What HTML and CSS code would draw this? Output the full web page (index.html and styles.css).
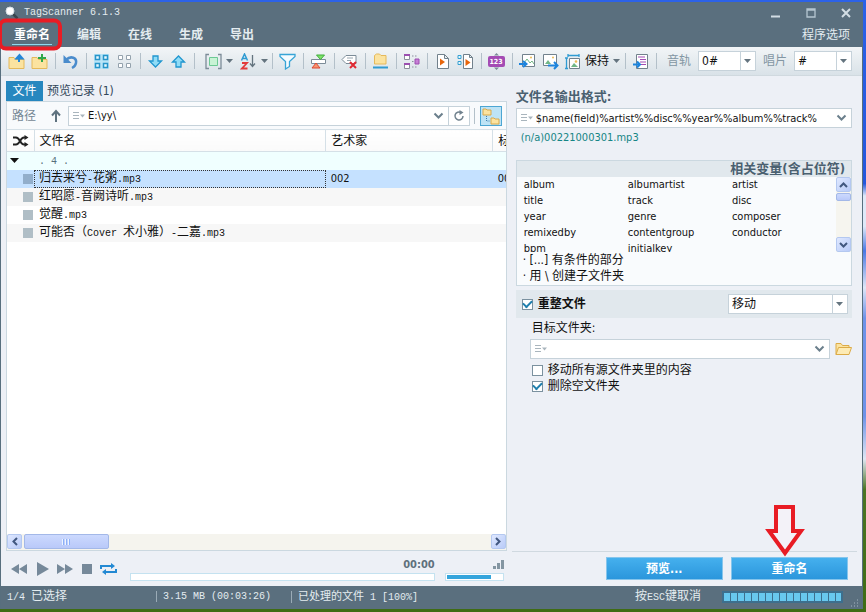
FILE: index.html
```html
<!DOCTYPE html>
<html lang="zh-CN">
<head>
    <meta charset="UTF-8">
    <meta name="viewport" content="width=device-width, initial-scale=1.0">
    <title>TagScanner 6.1.3</title>
    <link rel="stylesheet" href="styles.css">
</head>
<body>
    <div class="window">
        <header class="header">
            <div class="titlebar">
                <svg class="app-icon" width="14" height="14" viewBox="0 0 14 14"><path d="M8 8l4.500 4.500" stroke="#39454e" stroke-width="2.500"/><circle cx="5" cy="5" r="4" fill="#fff" stroke="#d5dee4"/></svg>
                <h1 class="title mono">TagScanner 6.1.3</h1>
                <button class="win-button" aria-label="最小化"><svg width="12" height="12"><path d="M1 9.500h9" stroke="#d2dde4" stroke-width="2"/></svg></button>
                <button class="win-button" aria-label="最大化"><svg width="12" height="12"><path d="M2 2h8v8H2zM2 3h8" fill="none" stroke="#b5c6d1" stroke-width="1.300"/></svg></button>
                <button class="win-button" aria-label="关闭"><svg width="12" height="12"><path d="M2 2l8 8M10 2l-8 8" stroke="#d2dde4" stroke-width="2"/></svg></button>
            </div>
            <nav class="menu">
                <a class="menu-item active" href="#">重命名</a>
                <a class="menu-item" href="#">编辑</a>
                <a class="menu-item" href="#">在线</a>
                <a class="menu-item" href="#">生成</a>
                <a class="menu-item" href="#">导出</a>
                <a class="menu-options" href="#">程序选项</a>
            </nav>
            <svg class="mark-ring" width="66" height="34" viewBox="0 0 66 34"><rect x="2" y="2.500" width="60" height="28" rx="6" fill="none" stroke="#e81c24" stroke-width="4"/></svg>
        </header>

        <div class="toolbar">
            <button class="tool" aria-label="打开文件夹"><svg width="17" height="17"><path d="M1 4.500h5l1.500 2H16v9H1z" fill="#fbe3a0" stroke="#e5b95b"/><path d="M11 9V4M8.500 5.500L11.500 2l3 3.500z" fill="#2386d8" stroke="#2386d8" stroke-width="2"/></svg></button>
            <button class="tool" aria-label="添加文件夹"><svg width="17" height="17"><path d="M1 4.500h5l1.500 2H16v9H1z" fill="#fbe3a0" stroke="#e5b95b"/><path d="M11 1v8M7 5h8" stroke="#2fa84a" stroke-width="2"/></svg></button>
            <span class="sep"></span>
            <button class="tool" aria-label="撤销"><svg width="17" height="17"><path d="M4 7c5-5 11-2 10 3-.5 2.500-2 4-4 5" fill="none" stroke="#4a8ccc" stroke-width="2.500"/><path d="M1.500 2v8h8z" fill="#4a8ccc"/></svg></button>
            <span class="sep"></span>
            <button class="tool" aria-label="全选"><svg width="17" height="17"><path d="M1 1h15v15H1z" fill="#b9e5f7"/><path d="M2.500 2.500h4v4h-4zM10.500 2.500h4v4h-4zM2.500 10.500h4v4h-4zM10.500 10.500h4v4h-4z" fill="#e9f8fd" stroke="#2795c9" stroke-width="1.500"/></svg></button>
            <button class="tool" aria-label="取消选择"><svg width="17" height="17"><path d="M2.500 2.500h4v4h-4zM10.500 2.500h4v4h-4zM2.500 10.500h4v4h-4zM10.500 10.500h4v4h-4z" fill="#fff" stroke="#94a2ad"/></svg></button>
            <span class="sep"></span>
            <button class="tool" aria-label="下移"><svg width="17" height="17"><path d="M6 3h5v5h3.500l-6 6-6-6H6z" fill="#8fdcf7" stroke="#2196cf" stroke-width="1.300"/></svg></button>
            <button class="tool" aria-label="上移"><svg width="17" height="17"><path d="M6 14h5V9h3.500l-6-6-6 6H6z" fill="#8fdcf7" stroke="#2196cf" stroke-width="1.300"/></svg></button>
            <span class="sep"></span>
            <button class="tool tool-drop" aria-label="视图"><svg width="17" height="17"><path d="M4 1.500H1v14h3M13 1.500h3v14h-3" fill="none" stroke="#7c8c98" stroke-width="1.300"/><path d="M4.500 4.500h8v8h-8z" fill="#c8f3d5" stroke="#6cc994"/></svg><svg class="caret" width="7" height="4"><path d="M0 0h7L3.500 4z"/></svg></button>
            <button class="tool tool-drop" aria-label="排序"><svg width="17" height="17"><path d="M1.500 7.500L4.500 1l3 6.500M2.500 5.500h4" fill="none" stroke="#2f9bd2" stroke-width="1.500"/><path d="M2 10h5l-5 5.500h5.500" fill="none" stroke="#e23b3b" stroke-width="1.800"/><path d="M12.500 2v11M10 10.500l2.500 3 2.500-3" fill="none" stroke="#64747f" stroke-width="1.300"/></svg><svg class="caret" width="7" height="4"><path d="M0 0h7L3.500 4z"/></svg></button>
            <span class="sep"></span>
            <button class="tool" aria-label="筛选"><svg width="17" height="17"><path d="M1 1.500h15v2l-5.500 5v5l-4 2.500V8.500L1 3.500z" fill="#f4fbff" stroke="#37a4d6" stroke-width="1.300"/></svg></button>
            <span class="sep"></span>
            <button class="tool" aria-label="交换"><svg width="17" height="17"><path d="M1.500 6.500h14v4h-14z" fill="#fff" stroke="#7c8c98"/><path d="M6.500 2h8l-4 4.500z" fill="#7ee26a" stroke="#3fae3a"/><path d="M2 15h8L6 10z" fill="#f7936f" stroke="#dc4733"/></svg></button>
            <span class="sep"></span>
            <button class="tool" aria-label="清除标签"><svg width="17" height="17"><path d="M5 2.500h10v8H5L1 6.500z" fill="#fff" stroke="#7c8c98"/><path d="M6 5h6M6 7.500h4" stroke="#97a5af"/><path d="M9 9l6 6M15 9l-6 6" stroke="#e02a33" stroke-width="2"/></svg></button>
            <span class="sep"></span>
            <button class="tool" aria-label="文件夹"><svg width="17" height="17"><path d="M2.500 2.500l2-1.500h3l1.500 1.500h5V11H2.500z" fill="#fbe3a0" stroke="#e5b95b"/><path d="M1 14.500h15" stroke="#2f9bd2" stroke-width="2"/></svg></button>
            <span class="sep"></span>
            <button class="tool" aria-label="拆分字段"><svg width="17" height="17"><path d="M1.500 1.500h5v5h-5zM1.500 10.500h5v5h-5z" fill="#fff" stroke="#8b8f9c"/><path d="M1 2h6M1 11h6" stroke="#9c4fb0" stroke-width="2"/><path d="M9 3h5M9 14h5M9 8.500h2" stroke="#8b8f9c" stroke-dasharray="1.500 1.500"/><path d="M12 6h4v5h-4z" fill="#c77fd6" stroke="#9c4fb0"/></svg></button>
            <span class="sep"></span>
            <button class="tool" aria-label="播放文件"><svg width="17" height="17"><path d="M3.500 1.500h7l4 4v10h-11zM10.500 1.500v4h4" fill="#fff" stroke="#71818c"/><path d="M6 5.500v7l5-3.500z" fill="#e8660c"/></svg></button>
            <button class="tool" aria-label="播放列表"><svg width="17" height="17"><path d="M1 2.500h3v3H1zM1 8.500h3v3H1z" fill="#e6f7fe" stroke="#35a0d2"/><path d="M6.500 1.500h6l3 3v11h-9zM12.500 1.500v3h3" fill="#fff" stroke="#71818c"/><path d="M8.500 6v7l5-3.500z" fill="#e8660c"/></svg></button>
            <span class="sep"></span>
            <button class="tool" aria-label="自动编号"><svg width="17" height="17"><path d="M6 2.500L8.500 0 11 2.500zM6 14.500L8.500 17l2.500-2.500z" fill="#7c8c98"/><rect x="0" y="3" width="17" height="11" rx="2" fill="#a44cb4"/><text x="8" y="11" class="icon-digits">123</text></svg></button>
            <span class="sep"></span>
            <button class="tool" aria-label="导入封面"><svg width="17" height="17"><path d="M3.500 1.500h12v12h-12z" fill="#fff" stroke="#71818c"/><path d="M5 10l3-4 3 4 2-2 2 3" fill="none" stroke="#72b786"/><circle cx="12" cy="4.500" r="1" fill="#edbb54"/><path d="M0 11h6M4 8l3.500 3L4 14" fill="none" stroke="#1c84dd" stroke-width="2"/></svg></button>
            <button class="tool" aria-label="导出封面"><svg width="17" height="17"><path d="M1.500 1.500h13v11h-13z" fill="#fff" stroke="#71818c"/><path d="M3 11l3-4 3 4z" fill="#72b786"/><circle cx="11" cy="4.500" r="1" fill="#edbb54"/><path d="M6 12.500h8M12 9l3.500 3.500L12 16" fill="none" stroke="#1c84dd" stroke-width="2"/></svg></button>
            <button class="tool tool-text"><svg width="17" height="17"><path d="M4 1v3M15 1v3M4 2.500h11M1 5h3M1 15.500h3M2.500 5v10" fill="none" stroke="#2f9bd2" stroke-width="1.300"/><path d="M5.500 5.500h10v10h-10z" fill="#fff" stroke="#71818c"/><path d="M7 14l3-4 4 4z" fill="#72b786"/><circle cx="12" cy="8.500" r="1.300" fill="#edbb54"/></svg><span>保持</span><svg class="caret" width="7" height="4"><path d="M0 0h7L3.500 4z"/></svg></button>
            <span class="sep"></span>
            <button class="tool" aria-label="导入文本"><svg width="17" height="17"><path d="M4.500 1.500h11v14h-11z" fill="#fff" stroke="#71818c"/><path d="M6 4h7M8 6.500h6M8 9h6M9 11.500h5" stroke="#a44cb4"/><path d="M1 11.500h6M5 8.500l3 3-3 3" fill="none" stroke="#1c84dd" stroke-width="2"/></svg></button>
            <span class="sep"></span>
            <label class="tool-label" for="trackFormat">音轨</label>
            <div class="select select-small">
                <select id="trackFormat"><option>0#</option></select>
                <svg class="caret" width="7" height="4"><path d="M0 0h7L3.500 4z"/></svg>
            </div>
            <label class="tool-label" for="discFormat">唱片</label>
            <div class="select select-small">
                <select id="discFormat"><option>#</option></select>
                <svg class="caret" width="7" height="4"><path d="M0 0h7L3.500 4z"/></svg>
            </div>
        </div>

        <main class="content">
            <section class="files">
                <div class="tabs">
                    <button class="tab active">文件</button>
                    <button class="tab">预览记录 (1)</button>
                </div>
                <div class="file-box">
                    <div class="path-row">
                        <label class="path-label" for="path">路径</label>
                        <button class="plain path-up" aria-label="上级文件夹"><svg width="12" height="14"><path d="M6 13V2M2 6.500L6 2l4 4.500" fill="none" stroke="#5f727f" stroke-width="2"/></svg></button>
                        <div class="combo">
                            <svg class="history" width="12" height="8"><path d="M0 .5h6M0 3.500h6M0 6.500h6" stroke="#a9b5bd"/><path d="M7 2.500h5l-2.500 3z" fill="#a9b5bd"/></svg>
                            <input id="path" type="text" value="E:\yy\">
                            <button class="plain" aria-label="展开路径"><svg width="11" height="8"><path d="M1.500 1.500l4 4 4-4" fill="none" stroke="#6b7f8c" stroke-width="2"/></svg></button>
                        </div>
                        <button class="plain refresh" aria-label="刷新"><svg width="12" height="12"><path d="M8 2.500A4 4 0 1 0 10 6" fill="none" stroke="#71828e" stroke-width="1.500"/><path d="M6.500 0v5l4-2.500z" fill="#71828e"/></svg></button>
                        <span class="sep"></span>
                        <button class="plain subfolders" aria-label="包含子文件夹"><svg width="18" height="18"><path d="M1 2h3l1 1h4v5H1zM9 11h3l1 1h4v5H9z" fill="#fbe3a0" stroke="#d9a94a"/><path d="M4.500 9v5H8" fill="none" stroke="#3f7fae" stroke-dasharray="1 1"/></svg></button>
                    </div>
                    <table class="file-table">
                        <colgroup><col class="col-mark"><col><col class="col-artist"><col class="col-title"></colgroup>
                        <thead>
                            <tr>
                                <th><svg width="17" height="12"><path d="M1 2.500h3c4 0 4 7 8 7h2M1 9.500h3c4 0 4-7 8-7h2" fill="none" stroke="#222" stroke-width="2"/><path d="M12.500 0v5l4-2.500zM12.500 7v5l4-2.500z" fill="#222"/></svg></th>
                                <th>文件名</th>
                                <th>艺术家</th>
                                <th>标题</th>
                            </tr>
                        </thead>
                        <tbody>
                            <tr class="group"><td><svg width="9" height="6"><path d="M0 0h9L4.500 5z" fill="#111"/></svg></td><td colspan="3"><span class="mono">. 4 .</span></td></tr>
                            <tr class="selected"><td><span class="mark"></span></td><td class="focused">归去来兮<span class="mono">-</span>花粥<span class="mono">.mp3</span></td><td>002</td><td>00</td></tr>
                            <tr class="striped"><td><span class="mark"></span></td><td>红昭愿<span class="mono">-</span>音阙诗听<span class="mono">.mp3</span></td><td></td><td></td></tr>
                            <tr><td><span class="mark"></span></td><td>觉醒<span class="mono">.mp3</span></td><td></td><td></td></tr>
                            <tr class="striped"><td><span class="mark"></span></td><td>可能否（<span class="mono">Cover </span>术小雅）<span class="mono">-</span>二嘉<span class="mono">.mp3</span></td><td></td><td></td></tr>
                        </tbody>
                    </table>
                    <div class="hscroll">
                        <button class="scroll-button" aria-label="向左滚动"><svg width="8" height="9"><path d="M6 1L2.500 4.500 6 8" fill="none" stroke="#41577f" stroke-width="2"/></svg></button>
                        <div class="thumb"><svg width="9" height="6"><path d="M.5 0v6M3.500 0v6M6.500 0v6" stroke="#eef4fe"/><path d="M1.500 0v6M4.500 0v6M7.500 0v6" stroke="#8cb0f8"/></svg></div>
                        <button class="scroll-button scroll-end" aria-label="向右滚动"><svg width="8" height="9"><path d="M2 1l3.500 3.500L2 8" fill="none" stroke="#41577f" stroke-width="2"/></svg></button>
                    </div>
                </div>
                <div class="player">
                    <div class="player-buttons">
                        <button class="plain" aria-label="上一首"><svg width="17" height="12"><path d="M8 1v10L0 6zM16 1v10L8 6z" fill="#76899a"/></svg></button>
                        <button class="plain" aria-label="播放"><svg width="13" height="14"><path d="M1 0v14l12-7z" fill="#76899a"/></svg></button>
                        <button class="plain" aria-label="下一首"><svg width="17" height="12"><path d="M0 1v10l8-5zM8 1v10l8-5z" fill="#76899a"/></svg></button>
                        <button class="plain" aria-label="停止"><svg width="10" height="10"><path d="M0 0h10v10H0z" fill="#76899a"/></svg></button>
                        <button class="plain" aria-label="循环"><svg width="17" height="12"><path d="M1 6V3h11M16 6v3H5" fill="none" stroke="#2389d3" stroke-width="2"/><path d="M11 0v6l4-3zM6 6v6L2 9z" fill="#2389d3"/></svg></button>
                    </div>
                    <div class="seek">
                        <span class="time">00:00</span>
                        <div class="bar"></div>
                    </div>
                    <div class="volume">
                        <svg width="11" height="9"><path d="M0 6h3v3H0zM4 3h3v6H4zM8 0h3v9H8z" fill="#8496a2"/></svg>
                        <div class="bar"><div class="level"></div></div>
                    </div>
                </div>
            </section>

            <section class="settings">
                <div class="settings-body">
                    <label class="heading" for="format">文件名输出格式:</label>
                    <div class="combo">
                        <svg class="history" width="12" height="8"><path d="M0 .5h6M0 3.500h6M0 6.500h6" stroke="#a9b5bd"/><path d="M7 2.500h5l-2.500 3z" fill="#a9b5bd"/></svg>
                        <input id="format" type="text" value="$name(field)%artist%%disc%%year%%album%%track%">
                        <button class="plain" aria-label="展开格式"><svg width="11" height="8"><path d="M1.500 1.500l4 4 4-4" fill="none" stroke="#6b7f8c" stroke-width="2"/></svg></button>
                    </div>
                    <p class="preview">(n/a)00221000301.mp3</p>

                    <div class="variables">
                        <h2 class="variables-title">相关变量(含占位符)</h2>
                        <div class="variables-list">
                            <ul>
                                <li>album</li><li>albumartist</li><li>artist</li>
                                <li>title</li><li>track</li><li>disc</li>
                                <li>year</li><li>genre</li><li>composer</li>
                                <li>remixedby</li><li>contentgroup</li><li>conductor</li>
                                <li>bpm</li><li>initialkey</li>
                            </ul>
                            <div class="vscroll">
                                <button class="scroll-button" aria-label="向上滚动"><svg width="9" height="8"><path d="M1 6l3.500-3.500L8 6" fill="none" stroke="#41577f" stroke-width="2"/></svg></button>
                                <div class="thumb"></div>
                                <button class="scroll-button scroll-end" aria-label="向下滚动"><svg width="9" height="8"><path d="M1 2l3.500 3.500L8 2" fill="none" stroke="#41577f" stroke-width="2"/></svg></button>
                            </div>
                        </div>
                        <p>· [...] 有条件的部分</p>
                        <p>· 用 \ 创建子文件夹</p>
                    </div>

                    <div class="organize">
                        <label class="check"><input type="checkbox" checked>重整文件</label>
                        <div class="select">
                            <select aria-label="重整方式"><option>移动</option></select>
                            <svg class="caret" width="7" height="4"><path d="M0 0h7L3.500 4z"/></svg>
                        </div>
                    </div>
                    <div class="target">
                        <label for="target">目标文件夹:</label>
                        <div class="target-row">
                            <div class="combo">
                                <svg class="history" width="12" height="8"><path d="M0 .5h6M0 3.500h6M0 6.500h6" stroke="#a9b5bd"/><path d="M7 2.500h5l-2.500 3z" fill="#a9b5bd"/></svg>
                                <input id="target" type="text">
                                <button class="plain" aria-label="展开文件夹"><svg width="11" height="8"><path d="M1.500 1.500l4 4 4-4" fill="none" stroke="#6b7f8c" stroke-width="2"/></svg></button>
                            </div>
                            <button class="plain" aria-label="浏览"><svg width="17" height="14"><path d="M1 12.500v-11h5l1.500 2H14V6" fill="#fbe3a0" stroke="#dcab47"/><path d="M3.500 5.500h13l-2.500 7H1z" fill="#fdebb5" stroke="#dcab47"/></svg></button>
                        </div>
                        <label class="check"><input type="checkbox">移动所有源文件夹里的内容</label>
                        <label class="check"><input type="checkbox" checked>删除空文件夹</label>
                    </div>
                </div>
                <div class="actions">
                    <button class="action">预览...</button>
                    <button class="action">重命名</button>
                    <svg class="mark-arrow" width="40" height="54" viewBox="0 0 40 54"><path d="M11 3h17v24h8L20 49 4 27h7z" fill="#f3f2f8" stroke="#e81c24" stroke-width="4"/></svg>
                </div>
            </section>
        </main>

        <footer class="status">
            <span class="status-selected"><span class="mono">1/4 </span>已选择</span>
            <span class="status-size mono">3.15 MB (00:03:26)</span>
            <span class="status-done">已处理的文件<span class="mono"> 1 [100%]</span></span>
            <span class="status-hint">按<span class="mono">ESC</span>键取消</span>
            <div class="status-progress"></div>
            <svg class="grip" width="8" height="8"><path d="M6 1h1M6 4h1M3 4h1M6 7h1M3 7h1M0 7h1" stroke="#a7b7c1"/></svg>
        </footer>
    </div>
</body>
</html>
```
FILE: styles.css
```css
* {
    box-sizing: border-box;
}

body {
    display: flex;
    min-height: 100vh;
    margin: 0;
    padding: 2px 3px 3px 0;
    background:
        linear-gradient(#3f6c14, #3f6c14) bottom / 100% 3px no-repeat,
        linear-gradient(#2c62e8 0%, #2457dc 30%, #dfe9f8 32%, #dfe9f8 37%, #4a78e4 41%, #dfe6f6 47%, #6d92e8 52%, #6d92e8 68%, #dfe6f2 75%, #4b7423 80%, #3f6c14 100%);
    font: 12px/16px "DejaVu Sans Condensed", "Noto Sans CJK SC", sans-serif;
    color: #111;
}

button, input, select {
    font: inherit;
    color: inherit;
}

button {
    padding: 0;
    border: none;
    background: none;
    cursor: pointer;
}

svg {
    display: block;
    flex: none;
}

h1, h2, p, ul {
    margin: 0;
    padding: 0;
}

.mono {
    font-family: "Liberation Mono", monospace;
    font-size: 10px;
    font-weight: normal;
    white-space: pre;
}

.window {
    display: flex;
    flex: 1;
    flex-direction: column;
    min-width: 0;
    border: solid #586f7e;
    border-width: 0 1px;
    background: #edf0f6;
}

/* Header */
.header {
    position: relative;
    background: #5a6f7e;
    color: #e4ecf0;
}

.titlebar {
    display: flex;
    align-items: center;
    height: 22px;
    padding: 0 10px 0 4px;
}

.title {
    flex: 1;
    margin-left: 5px;
}

.win-button {
    margin-left: 23px;
}

.menu {
    display: flex;
    height: 23px;
    padding: 0 12px 0 11px;
    gap: 23px;
}

.menu a {
    color: inherit;
    line-height: 22px;
    text-decoration: none;
}

.menu .menu-item {
    min-width: 28px;
    height: 21px;
    padding: 0 2px;
    font-weight: bold;
}

.menu .active {
    border-bottom: 1px solid #8fd8ee;
    color: #fff;
}

.menu .menu-options {
    margin-left: auto;
}

.mark-ring {
    position: absolute;
    top: 16px;
    left: -3px;
}

/* Toolbar */
.toolbar {
    display: flex;
    align-items: center;
    height: 29px;
    padding: 0 10px 0 4px;
    border-bottom: 1px solid #d0d9df;
    background: linear-gradient(#f2f5f7, #d9e2e8);
}

.tool {
    display: flex;
    flex: none;
    align-items: center;
    justify-content: center;
    width: 23px;
    height: 24px;
}

.tool-drop {
    width: 35px;
    gap: 4px;
    justify-content: flex-end;
}

.tool-text {
    width: auto;
    padding: 0 1px 0 2px;
    gap: 4px;
}

.sep {
    flex: none;
    width: 1px;
    height: 16px;
    margin: 0 3px 0 4px;
    background: #b3c0c9;
}

.caret {
    fill: #64747f;
}

.icon-digits {
    fill: #fff;
    font-size: 7px;
    font-weight: bold;
    text-anchor: middle;
}

.tool-label {
    flex: none;
    padding: 0 7px;
    color: #8396a3;
}

.select {
    display: grid;
    grid-template-columns: 1fr 15px;
    align-items: center;
    width: 120px;
    height: 20px;
    border: 1px solid #c6d2da;
    background: #fff;
}

.select-small {
    width: 58px;
}

.select select {
    grid-area: 1 / 1 / 2 / 3;
    width: 100%;
    height: 18px;
    padding: 0 3px;
    border: none;
    background: none;
    appearance: none;
}

.select .caret {
    grid-area: 1 / 2 / 2 / 3;
    width: 15px;
    height: 18px;
    padding: 7px 4px 7px 3px;
    border-left: 1px solid #c6d2da;
    pointer-events: none;
}

/* Content */
.content {
    display: grid;
    grid-template-columns: minmax(0, 1.45fr) minmax(0, 1fr);
    flex: 1;
    gap: 5px;
    padding: 5px 5px 0;
}

.files, .settings {
    display: flex;
    flex-direction: column;
}

.tabs {
    display: flex;
    height: 20px;
}

.tab {
    padding: 0 4px;
    color: #33475a;
}

.tab.active {
    width: 37px;
    background: #2787bf;
    color: #fff;
}

.file-box {
    display: flex;
    flex: 1;
    flex-direction: column;
    border: 1px solid #cbd8e0;
    background: #fff;
}

.path-row {
    display: flex;
    align-items: center;
    height: 27px;
    padding: 0 4px 0 5px;
    background: #f8fafc;
}

.path-label {
    color: #758794;
}

.path-up {
    margin: 0 6px 0 14px;
}

.plain {
    display: flex;
    flex: none;
    align-items: center;
    justify-content: center;
}

.combo {
    display: flex;
    flex: 1;
    align-items: center;
    min-width: 0;
    height: 20px;
    padding: 0 4px;
    border: 1px solid #c6d2da;
    background: #fff;
}

.combo input {
    flex: 1;
    min-width: 0;
    height: 18px;
    padding: 0 3px;
    border: none;
    outline: none;
    background: none;
    font-size: 11px;
}

.refresh {
    width: 21px;
    height: 20px;
    border: 1px solid #c6d2da;
    border-left: none;
    background: #fff;
}

.subfolders {
    width: 22px;
    height: 20px;
    margin-left: 2px;
    border: 1px solid #4ca6d3;
    background: #bde3f5;
}

/* File list */
.file-table {
    width: 100%;
    border-collapse: collapse;
    table-layout: fixed;
}

.col-mark {
    width: 27px;
}

.col-artist {
    width: 167px;
}

.col-title {
    width: 13px;
}

.file-table th {
    height: 22px;
    padding: 0 5px;
    border: solid #d5e0e7;
    border-width: 1px 1px 1px 0;
    background: linear-gradient(#fff, #fafafa);
    font-weight: normal;
    text-align: left;
}

.file-table td {
    height: 18px;
    padding: 0 5px;
    line-height: 16px;
}

.file-table th, .file-table td {
    overflow: hidden;
    white-space: nowrap;
}

.file-table td:nth-child(n+3) {
    font-size: 11px;
}

.file-table tr > :first-child {
    padding: 0 0 0 5px;
}

.file-table tr > :last-child {
    border-right: none;
}

.file-table td:first-child {
    padding-left: 3px;
}

.striped {
    background: #f7f7f7;
}

.group {
    background: #f0ffff;
    color: #56707c;
}

.selected {
    background: #c5e1ff;
}

.focused {
    outline: 1px dotted #333;
    outline-offset: -1px;
}

.mark {
    display: block;
    width: 10px;
    height: 10px;
    margin-left: 13px;
    background: #b0bec6;
}

.selected .mark {
    background: #92aecb;
}

/* Scroll bars */
.hscroll {
    display: flex;
    height: 16px;
    margin-top: auto;
    gap: 2px;
    background: #f5f4ee;
}

.scroll-button {
    display: flex;
    flex: none;
    align-items: center;
    justify-content: center;
    width: 15px;
    height: 15px;
    border: 1px solid #b4c8f0;
    border-radius: 2px;
    background: linear-gradient(135deg, #dfe8ff, #b9cbf8);
}

.thumb {
    display: flex;
    align-items: center;
    justify-content: center;
    border: 1px solid #a3b8e8;
    border-radius: 2px;
    background: linear-gradient(#ccd9fe, #b9c9f9);
}

.hscroll .thumb {
    width: 17%;
    height: 15px;
}

.hscroll .scroll-end {
    margin-left: auto;
}

.vscroll {
    display: flex;
    flex: none;
    flex-direction: column;
    width: 15px;
    background: #f6f5ef;
}

.vscroll .thumb {
    height: 8px;
    margin-top: 1px;
}

.vscroll .scroll-end {
    margin-top: auto;
}

/* Player */
.player {
    display: flex;
    height: 35px;
    padding: 9px 3px 6px 5px;
}

.player-buttons {
    display: flex;
    align-items: center;
    height: 18px;
    gap: 8px;
}

.seek {
    flex: 1;
    margin: -3px 10px 0 13px;
}

.time {
    display: block;
    color: #5f717d;
    font-size: 11px;
    font-weight: bold;
    text-align: right;
}

.bar {
    height: 8px;
    border: 1px solid #c4e2f0;
    background: #fff;
}

.volume {
    width: 59px;
}

.volume svg {
    margin: 0 0 4px auto;
}

.level {
    width: 77%;
    height: 4px;
    margin: 1px;
    background: #35a5dc;
}

/* Settings */
.settings-body {
    flex: 1;
    padding: 8px 5px 0 4px;
}

.heading {
    display: block;
    color: #4a6070;
    font-size: 13px;
    font-weight: bold;
}

.heading + .combo {
    margin-top: 3px;
}

.preview {
    padding: 2px 5px;
    color: #158585;
    font-size: 11px;
}

.variables {
    height: 126px;
    margin-top: 12px;
    border: 1px solid #cbd8e0;
    background: #f9fbfd;
}

.variables-title {
    padding-right: 6px;
    background: #e1e8ed;
    color: #4a6070;
    font-size: 13px;
    line-height: 16px;
    text-align: right;
}

.variables-list {
    display: flex;
    height: 75px;
    overflow: hidden;
}

.variables ul {
    display: grid;
    grid-template-columns: repeat(3, 1fr);
    grid-auto-rows: 16px;
    flex: 1;
    padding-left: 7px;
    font-size: 11px;
    list-style: none;
}

.variables p {
    padding-left: 6px;
}

.organize {
    display: flex;
    align-items: center;
    justify-content: space-between;
    height: 28px;
    margin-top: 4px;
    padding: 0 4px 0 6px;
    background: #e1e8ed;
}

.organize .check {
    font-weight: bold;
}

.check {
    display: flex;
    align-items: center;
    gap: 5px;
}

.check input {
    display: grid;
    place-items: center;
    width: 11px;
    height: 11px;
    margin: 0;
    border: 1px solid #7b919f;
    background: #fff;
    appearance: none;
}

.check input:checked::before {
    content: "";
    width: 7px;
    height: 4px;
    margin-bottom: 3px;
    border: solid #1f7fae;
    border-width: 0 0 2px 2px;
    transform: rotate(-45deg);
}

.target {
    padding: 2px 0 0 14px;
}

.target > label {
    margin-left: 2px;
}

.target-row {
    display: flex;
    margin: 3px 0;
    gap: 5px;
}

.actions {
    display: flex;
    position: relative;
    height: 35px;
    padding: 5px 9px 6px 94px;
    gap: 8px;
    border-top: 1px solid #d0d9e0;
}

.action {
    flex: 1;
    border: 1px solid #86c5ec;
    background: linear-gradient(#45b0ee, #2b96dc);
    color: #fff;
    font-weight: bold;
}

.mark-arrow {
    position: absolute;
    right: 52px;
    bottom: 28px;
}

/* Status bar */
.status {
    display: flex;
    align-items: center;
    height: 23px;
    padding: 0 3px 2px 6px;
    background: #5a6f7e;
    color: #e4ecf0;
}

.status-selected {
    width: 149px;
}

.status-size, .status-done {
    padding-left: 6px;
    border-left: 1px solid #9aabb6;
    line-height: 11px;
}

.status-size {
    width: 135px;
}

.status-done {
    font-size: 11px;
}

.status-hint {
    margin-left: auto;
}

.status-progress {
    width: 121px;
    height: 12px;
    margin: 0 8px 0 21px;
    border: 2px solid #3d6f8d;
    background: repeating-linear-gradient(90deg, #68c8ee 0 6px, #3d6f8d 6px 7px);
}

.grip {
    align-self: flex-end;
}
```
